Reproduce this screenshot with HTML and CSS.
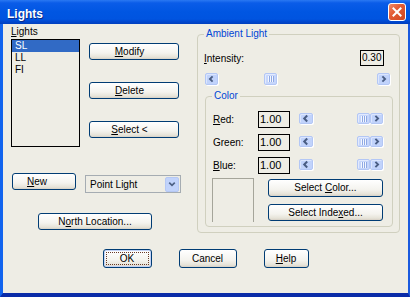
FILE: index.html
```html
<!DOCTYPE html>
<html>
<head>
<meta charset="utf-8">
<link rel="stylesheet" href="styles.css">
</head>
<body>
<div class="window">
  <div class="titlebar">
    <span class="title">Lights</span>
    <div class="close">
      <svg width="18" height="18" viewBox="0 0 18 18"><path d="M5 5 L13 13 M13 5 L5 13" stroke="#fff" stroke-width="2.2" stroke-linecap="square"/></svg>
    </div>
  </div>
  <div class="frame">
    <div class="client">
      <div class="top">
        <div class="left">
          <div class="lights-row">
            <div class="list-col">
              <div class="label"><u>L</u>ights</div>
              <div class="listbox">
                <div class="item sel">SL</div>
                <div class="item">LL</div>
                <div class="item">FI</div>
              </div>
            </div>
            <div class="btn-col">
              <div class="btn side"><span><u>M</u>odify</span></div>
              <div class="btn side"><span><u>D</u>elete</span></div>
              <div class="btn side"><span><u>S</u>elect &lt;</span></div>
            </div>
          </div>
          <div class="new-row">
            <div class="btn new"><span><u>N</u>ew</span></div>
            <div class="combo">
              <span class="combo-text">Point Light</span>
              <div class="combo-btn">
                <svg width="13" height="14" viewBox="0 0 13 14"><path d="M3.5 5.5 L6.5 8.5 L9.5 5.5" fill="none" stroke="#4d6185" stroke-width="1.8"/></svg>
              </div>
            </div>
          </div>
          <div class="btn north"><span>N<u>o</u>rth Location...</span></div>
        </div>
        <div class="group ambient">
          <div class="legend">Ambient Light</div>
          <div class="int-row">
            <span><u>I</u>ntensity:</span>
            <div class="edit int-edit">0.30</div>
          </div>
          <div class="scroll int-scroll">
            <div class="sbtn"><svg width="13" height="12" viewBox="0 0 13 12"><path d="M7.8 2.8 L4.6 6 L7.8 9.2" fill="none" stroke="#4a5e84" stroke-width="2.2"/></svg></div>
            <div class="track"><div class="thumb" style="margin-left:46px"><i></i><i></i><i></i></div></div>
            <div class="sbtn"><svg width="13" height="12" viewBox="0 0 13 12"><path d="M5.2 2.8 L8.4 6 L5.2 9.2" fill="none" stroke="#4a5e84" stroke-width="2.2"/></svg></div>
          </div>
          <div class="group color">
            <div class="legend">Color</div>
            <div class="rows">
              <div class="crow">
                <span class="clabel"><u>R</u>ed:</span>
                <div class="edit cedit">1.00</div>
                <div class="scroll cscroll">
                  <div class="sbtn"><svg width="13" height="11" viewBox="0 0 13 11"><path d="M7.8 2.3 L4.6 5.5 L7.8 8.7" fill="none" stroke="#4a5e84" stroke-width="2.2"/></svg></div>
                  <div class="track end"><div class="thumb"><i></i><i></i><i></i></div></div>
                  <div class="sbtn"><svg width="13" height="11" viewBox="0 0 13 11"><path d="M5.2 2.3 L8.4 5.5 L5.2 8.7" fill="none" stroke="#4a5e84" stroke-width="2.2"/></svg></div>
                </div>
              </div>
              <div class="crow">
                <span class="clabel">Green:</span>
                <div class="edit cedit">1.00</div>
                <div class="scroll cscroll">
                  <div class="sbtn"><svg width="13" height="11" viewBox="0 0 13 11"><path d="M7.8 2.3 L4.6 5.5 L7.8 8.7" fill="none" stroke="#4a5e84" stroke-width="2.2"/></svg></div>
                  <div class="track end"><div class="thumb"><i></i><i></i><i></i></div></div>
                  <div class="sbtn"><svg width="13" height="11" viewBox="0 0 13 11"><path d="M5.2 2.3 L8.4 5.5 L5.2 8.7" fill="none" stroke="#4a5e84" stroke-width="2.2"/></svg></div>
                </div>
              </div>
              <div class="crow">
                <span class="clabel"><u>B</u>lue:</span>
                <div class="edit cedit">1.00</div>
                <div class="scroll cscroll">
                  <div class="sbtn"><svg width="13" height="11" viewBox="0 0 13 11"><path d="M7.8 2.3 L4.6 5.5 L7.8 8.7" fill="none" stroke="#4a5e84" stroke-width="2.2"/></svg></div>
                  <div class="track end"><div class="thumb"><i></i><i></i><i></i></div></div>
                  <div class="sbtn"><svg width="13" height="11" viewBox="0 0 13 11"><path d="M5.2 2.3 L8.4 5.5 L5.2 8.7" fill="none" stroke="#4a5e84" stroke-width="2.2"/></svg></div>
                </div>
              </div>
            </div>
            <div class="swatch-row">
              <div class="swatch"></div>
              <div class="sel-col">
                <div class="btn selcolor"><span>Select <u>C</u>olor...</span></div>
                <div class="btn selindex"><span>Select Inde<u>x</u>ed...</span></div>
              </div>
            </div>
          </div>
        </div>
      </div>
      <div class="bottom">
        <div class="btn ok"><span class="focus">OK</span></div>
        <div class="btn cancel"><span>Cancel</span></div>
        <div class="btn help"><span><u>H</u>elp</span></div>
      </div>
    </div>
  </div>
</div>
</body>
</html>
```

FILE: styles.css
```css
html, body {
  margin: 0;
  padding: 0;
  background: #0054e3;
}
.window {
  width: 410px;
  height: 297px;
  display: flex;
  flex-direction: column;
  font-family: "Liberation Sans", Arial, sans-serif;
  font-size: 10px;
  color: #000;
  overflow: hidden;
}
.titlebar {
  height: 24px;
  flex: none;
  display: flex;
  align-items: flex-start;
  justify-content: space-between;
  background: linear-gradient(#2a78f2 0px, #0a5ce8 3px, #0056e2 12px, #0054e0 19px, #0046cc 22px, #003fbd 24px);
}
.title {
  color: #fff;
  font-weight: bold;
  font-size: 12px;
  line-height: 14px;
  margin: 7px 0 0 7px;
  text-shadow: 1px 1px 0 #0a2a8a;
}
.close {
  width: 18px;
  height: 18px;
  margin: 3px 4px 0 0;
  box-sizing: border-box;
  border: 1px solid #fff;
  border-radius: 3px;
  background: linear-gradient(135deg, #f08a6a, #e35d36 40%, #d1461f);
  display: flex;
  align-items: center;
  justify-content: center;
}
.close svg {
  width: 16px;
  height: 16px;
}
.frame {
  flex: 1;
  display: flex;
  border-left: 3px solid #1164ee;
  border-right: 2px solid #1a5ade;
  border-bottom: 4px solid #0a2ba8;
  box-shadow: inset 1px 0 0 #0036c0;
}
.client {
  flex: 1;
  background: #eeede5;
  display: flex;
  flex-direction: column;
}
.top {
  display: flex;
  align-items: flex-start;
}
.left {
  width: 194px;
  box-sizing: border-box;
  padding-left: 8px;
  display: flex;
  flex-direction: column;
  align-items: flex-start;
}
.lights-row {
  display: flex;
  align-items: flex-start;
}
.label {
  margin-top: 2px;
  line-height: 12px;
  height: 12px;
}
.listbox {
  margin-top: 1px;
  width: 69px;
  height: 108px;
  box-sizing: border-box;
  border: 1px solid #000;
  background: #eeede5;
}
.item {
  height: 12px;
  line-height: 12px;
  padding-left: 3px;
}
.item.sel {
  background: #316ac5;
  color: #fff;
}
.btn-col {
  margin-left: 9px;
  padding-top: 19px;
  display: flex;
  flex-direction: column;
  gap: 22px;
}
.btn {
  box-sizing: border-box;
  border: 1px solid #003c74;
  border-radius: 3px;
  background: linear-gradient(#ffffff, #f4f3ee 60%, #e6e3d8 88%, #d6d0c5);
  display: flex;
  align-items: center;
  justify-content: center;
  line-height: 12px;
  white-space: pre;
}
.btn.side {
  width: 90px;
  height: 17px;
  padding-right: 9px;
}
.new-row {
  margin-top: 26px;
  display: flex;
  align-items: flex-start;
}
.btn.new {
  margin-left: 1px;
  width: 64px;
  height: 17px;
  padding-right: 14px;
}
.combo {
  margin-left: 9px;
  margin-top: 2px;
  width: 96px;
  height: 18px;
  box-sizing: border-box;
  border: 1px solid #a5acb2;
  background: #eeede5;
  display: flex;
  align-items: center;
  justify-content: space-between;
}
.combo-text {
  padding-left: 4px;
}
.combo-btn {
  width: 14px;
  height: 15px;
  margin-right: 1px;
  box-sizing: border-box;
  background: #c1d3fb;
  border: 1px solid #b5c8f4;
  border-radius: 2px;
  display: flex;
  align-items: center;
  justify-content: center;
}
.btn.north {
  margin-top: 20px;
  margin-left: 27px;
  width: 114px;
  height: 17px;
}
.group {
  position: relative;
  box-sizing: border-box;
  border: 1px solid #d0d0bf;
  border-radius: 4px;
}
.legend {
  position: absolute;
  top: -7px;
  left: 6px;
  padding: 0 2px;
  background: #eeede5;
  color: #0046d5;
  line-height: 12px;
}
.ambient {
  margin-top: 10px;
  width: 203px;
  height: 199px;
  display: flex;
  flex-direction: column;
}
.int-row {
  margin: 15px 15px 0 6px;
  height: 16px;
  display: flex;
  align-items: center;
  justify-content: space-between;
}
.edit {
  box-sizing: border-box;
  border: 1px solid #000;
  background: #eeede5;
  line-height: 14px;
}
.int-edit {
  width: 24px;
  height: 16px;
  padding-left: 1px;
}
.scroll {
  display: flex;
  align-items: stretch;
}
.int-scroll {
  margin: 7px 9px 0 7px;
  height: 12px;
}
.sbtn {
  width: 13px;
  flex: none;
  box-sizing: border-box;
  background: #c1d3fb;
  border: 1px solid #b3c7f5;
  border-radius: 2px;
  box-shadow: inset 1px 1px 0 #dbe6fe, 1px 1px 0 #ffffff;
  display: flex;
  align-items: center;
  justify-content: center;
}
.sbtn svg {
  display: block;
}
.track {
  flex: 1;
  display: flex;
}
.track.end {
  justify-content: flex-end;
}
.thumb {
  width: 13px;
  box-sizing: border-box;
  background: #c6d6fb;
  border: 1px solid #b3c7f5;
  border-radius: 2px;
  box-shadow: inset 1px 1px 0 #e2eafe, 1px 1px 0 #ffffff;
  display: flex;
  align-items: center;
  justify-content: center;
  gap: 1px;
}
.thumb i {
  display: block;
  width: 1px;
  height: 6px;
  background: #f4f7fe;
  box-shadow: 1px 0 0 #8fa9e4;
}
.color {
  margin: 11px 6px 0 7px;
  height: 131px;
  display: flex;
  flex-direction: column;
}
.rows {
  margin-top: 14px;
  display: flex;
  flex-direction: column;
  gap: 6px;
}
.crow {
  height: 17px;
  display: flex;
  align-items: flex-start;
}
.clabel {
  margin-left: 7px;
  width: 45px;
  line-height: 17px;
}
.cedit {
  width: 32px;
  height: 17px;
  padding-left: 1px;
  font-size: 11px;
  line-height: 15px;
}
.cscroll {
  margin-left: 9px;
  margin-top: 2px;
  width: 84px;
  height: 11px;
}
.cscroll .sbtn:first-child {
  width: 14px;
}
.swatch-row {
  margin-top: 4px;
  display: flex;
  align-items: flex-start;
}
.swatch {
  margin-left: 6px;
  width: 42px;
  height: 44px;
  box-sizing: border-box;
  border: 1px solid #a5a59a;
  border-bottom: none;
}
.sel-col {
  margin-left: 14px;
  margin-top: 1px;
  display: flex;
  flex-direction: column;
  gap: 7px;
}
.btn.selcolor {
  width: 115px;
  height: 18px;
}
.btn.selindex {
  width: 115px;
  height: 17px;
}
.bottom {
  margin-top: 16px;
  display: flex;
  justify-content: center;
  gap: 27px;
}
.bottom .btn {
  height: 19px;
}
.btn.ok {
  width: 49px;
  padding: 2px;
  box-shadow: inset 0 0 0 1px #c4d3f6;
}
.focus {
  flex: 1;
  align-self: stretch;
  display: flex;
  align-items: center;
  justify-content: center;
  outline: 1px dotted #6a3a2a;
  outline-offset: -1px;
}
.btn.cancel {
  width: 58px;
}
.btn.help {
  width: 45px;
}
```
